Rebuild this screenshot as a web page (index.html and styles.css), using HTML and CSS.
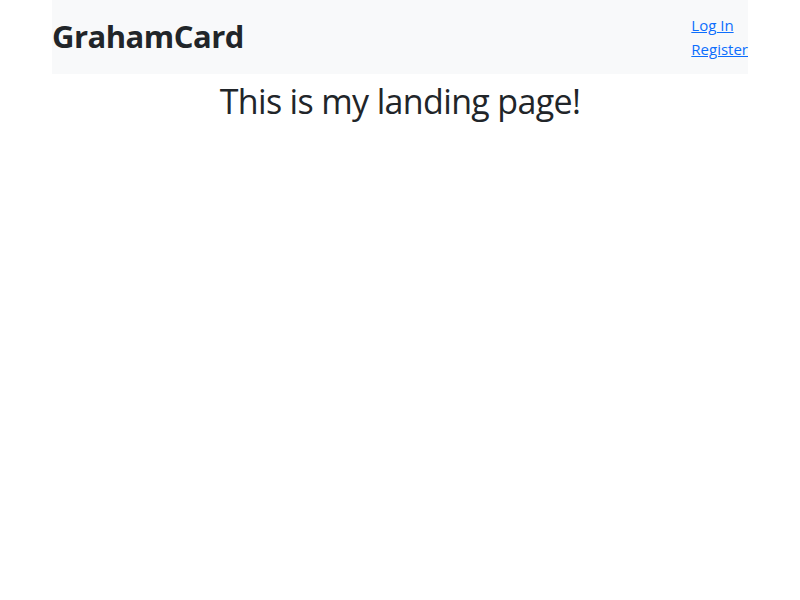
FILE: index.html
```html
<!DOCTYPE html>
<html lang="en">
<head>
<meta charset="utf-8">
<title>GrahamCard</title>
<link rel="stylesheet" href="styles.css">
</head>
<body>
<div class="container">
  <nav class="navbar">
    <a class="brand" href="#">GrahamCard</a>
    <ul class="nav-links">
      <li><a href="#">Log In</a></li>
      <li><a href="#">Register</a></li>
    </ul>
  </nav>
  <h1 class="title">This is my landing page!</h1>
</div>
</body>
</html>
```
FILE: styles.css
```css
* { box-sizing: border-box; }
body {
  margin: 0;
  font-family: "Open Sans", "Noto Sans", sans-serif;
  font-size: 16px;
  line-height: 1.5;
  color: #212529;
  background: #fff;
}
.container {
  width: 696px;
  margin: 0 auto;
}
.navbar {
  display: flex;
  align-items: center;
  justify-content: space-between;
  background: #f8f9fa;
  padding: 13px 0;
}
.brand {
  font-size: 31px;
  font-weight: 700;
  color: #212529;
  text-decoration: none;
  line-height: 1.2;
  letter-spacing: -0.5px;
}
.nav-links {
  list-style: none;
  margin: 0;
  padding: 0;
}
.nav-links li { line-height: 24px; }
.nav-links a {
  color: #0d6efd;
  font-size: 15px;
  text-decoration: underline;
}
.title {
  margin: 7px 0 0;
  text-align: center;
  font-size: 34px;
  font-weight: 400;
  line-height: 1.2;
  letter-spacing: -0.65px;
}
```
